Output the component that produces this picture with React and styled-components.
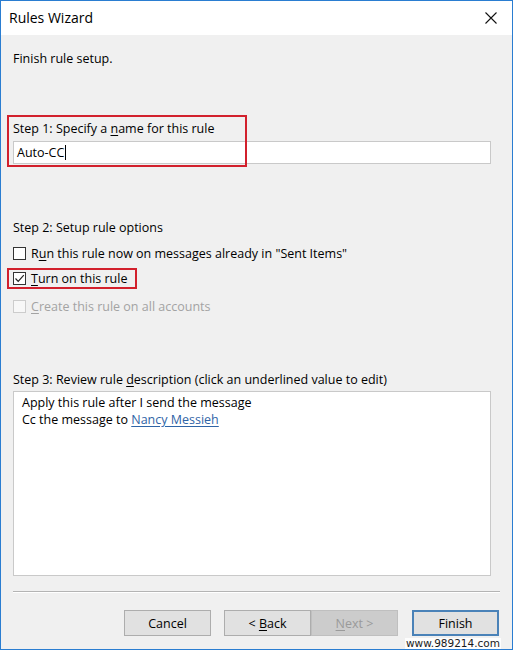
import React from 'react';
import styled, { createGlobalStyle } from 'styled-components';

const Global = createGlobalStyle`
  html, body { margin: 0; padding: 0; background: #ffffff; }
  #root { width: 513px; height: 650px; }
`;

const Window = styled.div`
  position: relative;
  width: 513px;
  height: 650px;
  box-sizing: border-box;
  border: 1px solid #2a7dd1;
  display: flex;
  flex-direction: column;
  background: #f0f0f0;
  font-family: "Open Sans", "Noto Sans", sans-serif;
  font-size: 12.5px;
  color: #000;
`;

const TitleBar = styled.div`
  height: 34px;
  flex: none;
  background: #ffffff;
  display: flex;
  align-items: center;
  justify-content: space-between;
  padding: 0 15px 0 8px;
`;

const Title = styled.div`
  font-size: 14px;
  color: #000;
  line-height: 18px;
`;

const CloseButton = styled.div`
  width: 12px;
  height: 12px;
  display: flex;
`;

const Content = styled.div`
  display: flex;
  flex-direction: column;
  padding: 0 21px 0 12px;
`;

const Label = styled.div`
  line-height: 17px;
  height: 17px;
  margin-top: ${p => p.$mt || 0}px;
  color: ${p => (p.$disabled ? '#a3a3a3' : '#000')};
  white-space: nowrap;
`;

const U = styled.span`
  text-decoration: underline;
  text-underline-offset: 2px;
`;

const Section = styled.div`
  position: relative;
  display: flex;
  flex-direction: column;
  margin-top: ${p => p.$mt || 0}px;
`;

const Highlight = styled.div`
  position: absolute;
  left: ${p => p.$left}px;
  top: ${p => p.$top}px;
  width: ${p => p.$w}px;
  height: ${p => p.$h}px;
  box-sizing: border-box;
  border: 2px solid #d2202c;
  pointer-events: none;
`;

const TextInput = styled.div`
  margin-top: 4px;
  height: 23px;
  box-sizing: border-box;
  border: 1px solid #c9c9c9;
  background: #ffffff;
  display: flex;
  align-items: center;
  padding-left: 3px;
  line-height: 17px;
`;

const Caret = styled.span`
  display: inline-block;
  width: 1px;
  height: 15px;
  background: #000;
  margin-left: 1px;
`;

const CheckRow = styled.div`
  position: relative;
  display: flex;
  align-items: center;
  gap: 5px;
  height: 17px;
  margin-top: ${p => p.$mt || 0}px;
  color: ${p => (p.$disabled ? '#a3a3a3' : '#000')};
  white-space: nowrap;
`;

const Box = styled.div`
  width: 13px;
  height: 13px;
  box-sizing: border-box;
  border: 1px solid ${p => (p.$disabled ? '#cccccc' : '#333333')};
  background: ${p => (p.$disabled ? '#f7f7f7' : '#ffffff')};
  display: flex;
  align-items: center;
  justify-content: center;
  flex: none;
`;

const DescBox = styled.div`
  margin-top: 3px;
  height: 185px;
  box-sizing: border-box;
  border: 1px solid #c9c9c9;
  background: #ffffff;
  padding: 2px 8px;
  line-height: 17px;
`;

const Link = styled.span`
  color: #2f64a6;
  text-decoration: underline;
  text-underline-offset: 2px;
`;

const Footer = styled.div`
  display: flex;
  flex-direction: column;
  padding: 0 12px;
  margin-top: 15px;
`;

const Separator = styled.div`
  height: 1px;
  background: #b4b4b4;
  border-bottom: 1px solid #ffffff;
`;

const ButtonRow = styled.div`
  display: flex;
  justify-content: flex-end;
  margin-top: 17px;
  padding-right: 1px;
`;

const Button = styled.div`
  width: 87px;
  height: 26px;
  box-sizing: border-box;
  margin-left: ${p => p.$ml || 0}px;
  border-style: solid;
  border-width: ${p => (p.$default ? '2px' : '1px')};
  border-color: ${p => (p.$disabled ? '#bfbfbf' : p.$default ? '#4a82b8' : '#adadad')};
  background: ${p => (p.$disabled ? '#cccccc' : '#e1e1e1')};
  color: ${p => (p.$disabled ? '#9a9a9a' : '#000')};
  display: flex;
  align-items: center;
  justify-content: center;
  line-height: 17px;
  white-space: pre;
`;

const Watermark = styled.div`
  position: absolute;
  right: 11px;
  bottom: 0px;
  font-family: "DejaVu Sans", sans-serif;
  font-size: 10.5px;
  line-height: 11px;
  color: #1a1a1a;
  background: rgba(255, 255, 255, 0.85);
  padding: 0 1px;
`;

export default function App() {
  return (
    <>
      <Global />
      <Window>
        <TitleBar>
          <Title>Rules Wizard</Title>
          <CloseButton>
            <svg width="12" height="12" viewBox="0 0 12 12">
              <path d="M0.5 0.5 L11.5 11.5 M11.5 0.5 L0.5 11.5" stroke="#111" strokeWidth="1.1" fill="none" />
            </svg>
          </CloseButton>
        </TitleBar>
        <Content>
          <Label $mt={15}>Finish rule setup.</Label>

          <Section $mt={53}>
            <Highlight $left={-6} $top={-5} $w={240} $h={52} />
            <Label>
              Step 1: Specify a <U>n</U>ame for this rule
            </Label>
            <TextInput>
              Auto-CC<Caret />
            </TextInput>
          </Section>

          <Label $mt={55}>Step 2: Setup rule options</Label>
          <CheckRow $mt={9}>
            <Box />
            <span>
              R<U>u</U>n this rule now on messages already in "Sent Items"
            </span>
          </CheckRow>
          <CheckRow $mt={8}>
            <Highlight $left={-6} $top={-2} $w={130} $h={21} />
            <Box>
              <svg width="11" height="11" viewBox="0 0 11 11">
                <path d="M1.5 5.5 L4.2 8.3 L9.8 2.2" stroke="#222" strokeWidth="1.2" fill="none" />
              </svg>
            </Box>
            <span>
              <U>T</U>urn on this rule
            </span>
          </CheckRow>
          <CheckRow $mt={11} $disabled>
            <Box $disabled />
            <span>
              <U>C</U>reate this rule on all accounts
            </span>
          </CheckRow>

          <Label $mt={56}>
            Step 3: Review rule <U>d</U>escription (click an underlined value to edit)
          </Label>
          <DescBox>
            <div>Apply this rule after I send the message</div>
            <div>
              Cc the message to <Link>Nancy Messieh</Link>
            </div>
          </DescBox>
        </Content>
        <Footer>
          <Separator />
          <ButtonRow>
            <Button>Cancel</Button>
            <Button $ml={13}>
              <span>
                {'< '}
                <U>B</U>ack
              </span>
            </Button>
            <Button $disabled>
              <span>
                <U>N</U>ext {'>'}
              </span>
            </Button>
            <Button $ml={14} $default>
              Finish
            </Button>
          </ButtonRow>
        </Footer>
        <Watermark>www.989214.com</Watermark>
      </Window>
    </>
  );
}
